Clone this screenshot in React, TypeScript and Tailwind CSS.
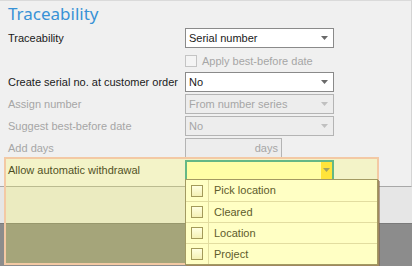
import React from "react";

const font = { fontFamily: '"Liberation Sans", Arial, sans-serif' };
const titleFont = { fontFamily: '"Noto Sans", "Open Sans", sans-serif' };

function Arrow({ color }: { color: string }) {
  return (
    <svg width="7" height="4" viewBox="0 0 7 4" className="shrink-0">
      <path d="M0 0 H7 L3.5 4 Z" fill={color} />
    </svg>
  );
}

function Combo({ value, disabled }: { value: string; disabled?: boolean }) {
  return (
    <div
      className={`flex h-[20px] w-[149px] items-center justify-between border pl-[3px] pr-[5px] ${
        disabled ? "border-[#b4b4b4] bg-[#ededed] text-[#a6a6a6]" : "border-[#8a8a8a] bg-white text-[#1a1a1a]"
      }`}
    >
      <span>{value}</span>
      <Arrow color={disabled ? "#c0c0c0" : "#6a6a6a"} />
    </div>
  );
}

function Row({ label, disabled, children }: { label: string; disabled?: boolean; children?: React.ReactNode }) {
  return (
    <div className="flex h-[22px] items-center">
      <div className={`w-[177px] shrink-0 whitespace-nowrap ${disabled ? "text-[#a6a6a6]" : "text-[#1a1a1a]"}`}>{label}</div>
      {children}
    </div>
  );
}

const options = ["Pick location", "Cleared", "Location", "Project"];

export default function App() {
  return (
    <div className="relative h-[266px] w-[412px] overflow-hidden bg-[#8c8c8c] text-[11px]" style={font}>
      <div className="flex h-[187px] flex-col border-t border-r border-b border-t-[#dadada] border-r-[#d4d4d4] border-b-[#a8a8a8] bg-[#f0f0f0] pl-[8px]">
        <div className="h-[26px] pt-[1px] text-[17px] leading-[24px] text-[#3892d6]" style={titleFont}>
          Traceability
        </div>
        <Row label="Traceability">
          <Combo value="Serial number" />
        </Row>
        <Row label="">
          <div className="flex items-center gap-[5px] self-start pt-[4px] text-[#a6a6a6]">
            <div className="h-[12px] w-[12px] border border-[#c4c4c4] bg-[#f4f4f4]" />
            <span>Apply best-before date</span>
          </div>
        </Row>
        <Row label="Create serial no. at customer order">
          <Combo value="No" />
        </Row>
        <Row label="Assign number" disabled>
          <Combo value="From number series" disabled />
        </Row>
        <Row label="Suggest best-before date" disabled>
          <Combo value="No" disabled />
        </Row>
        <Row label="Add days" disabled>
          <div className="flex h-[20px] w-[97px] items-center justify-end border border-[#b4b4b4] bg-[#ededed] pr-[3px] text-[#a6a6a6]">
            days
          </div>
        </Row>
        <Row label="Allow automatic withdrawal">
          <div className="flex h-[21px] w-[149px] items-stretch border-2 border-[#3aa59a] bg-[#ffffc4]">
            <div className="flex-1" />
            <div className="flex w-[11px] items-center justify-center bg-[#ffdd3c]">
              <Arrow color="#8a8a6a" />
            </div>
          </div>
        </Row>
      </div>
      <div className="h-[37px] border-b border-b-[#7a7a7a] bg-[#e6e6e6]" />

      {/* highlight overlay */}
      <div className="absolute left-[4px] top-[157px] h-[108px] w-[375px] border-2 border-[#f3c9a4] bg-[rgba(255,255,60,0.22)]" />

      {/* dropdown popup */}
      <div className="absolute left-[185px] top-[179px] w-[193px] border border-[#a39a62] bg-[#ffffc4] text-[#5e5c2c] shadow-[1px_1px_0_#a08860,2px_2px_0_rgba(120,90,60,0.5)]">
        {options.map((o, i) => (
          <div key={o} className={`flex h-[21px] items-stretch ${i > 0 ? "border-t border-t-[#e2dda0]" : ""}`}>
            <div className="flex w-[23px] items-center justify-center border-r border-r-[#e2dda0]">
              <div className="h-[12px] w-[12px] border border-[#a39a5a] bg-gradient-to-b from-[#ffffe0] to-[#f4f0b4]" />
            </div>
            <div className="flex items-center pl-[5px]">{o}</div>
          </div>
        ))}
      </div>
    </div>
  );
}
